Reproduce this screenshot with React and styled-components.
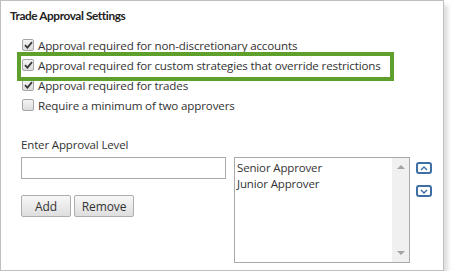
import React from 'react';
import styled, { createGlobalStyle } from 'styled-components';

const Global = createGlobalStyle`
    html, body {
        margin: 0;
        padding: 0;
        background: #fff;
    }
    body {
        font-family: "Segoe UI", "Open Sans", "Liberation Sans", sans-serif;
        color: #333;
    }
`

const Panel = styled.div`
    position: relative;
    box-sizing: border-box;
    width: 444px;
    height: 271px;
    border: 1px solid #bfbfbf;
    background: #fff;
    padding: 6px 9px;
    box-shadow: 4px 5px 4px rgba(0, 0, 0, 0.13);
`

const Title = styled.div`
    font-family: Lato, "Open Sans", sans-serif;
    font-size: 11.8px;
    line-height: 18px;
    font-weight: 700;
    letter-spacing: -0.4px;
    color: #222;
`

const Options = styled.div`
    display: flex;
    flex-direction: column;
    margin-top: 10px;
    padding-left: 12px;
`

const Option = styled.div`
    display: flex;
    align-items: center;
    gap: 4px;
    height: 20px;
    font-size: 11.6px;
    letter-spacing: -0.15px;
    white-space: nowrap;
`

const Box = styled.span`
    box-sizing: border-box;
    width: 12px;
    height: 12px;
    flex: none;
    display: flex;
    align-items: center;
    justify-content: center;
    border: 1px solid #a6a6a6;
    border-radius: 2px;
    background: linear-gradient(#f4f4f4, #dcdcdc);
`

const Highlight = styled.div`
    position: absolute;
    left: 16px;
    top: 51px;
    width: 377px;
    height: 29px;
    box-sizing: border-box;
    border: 4px solid #5f9f2c;
    pointer-events: none;
`

const Section = styled.div`
    margin-top: 22px;
    padding-left: 11px;
`

const Label = styled.div`
    font-size: 11.5px;
    line-height: 16px;
    letter-spacing: -0.15px;
    margin-bottom: 4px;
`

const Row = styled.div`
    display: flex;
    align-items: flex-start;
`

const LeftCol = styled.div`
    display: flex;
    flex-direction: column;
    gap: 16px;
    width: 205px;
`

const TextInput = styled.div`
    box-sizing: border-box;
    height: 22px;
    width: 205px;
    border: 1px solid #a9a9a9;
    background: #fff;
`

const Buttons = styled.div`
    display: flex;
    gap: 3px;
`

const Button = styled.div`
    box-sizing: border-box;
    width: ${p => p.w}px;
    height: 22px;
    display: flex;
    align-items: center;
    justify-content: center;
    border: 1px solid #adadad;
    border-radius: 2px;
    background: linear-gradient(#f7f7f7, #dedede);
    font-size: 12px;
    letter-spacing: -0.1px;
    color: #333;
`

const ListBox = styled.div`
    box-sizing: border-box;
    display: flex;
    margin-left: 8px;
    width: 176px;
    height: 106px;
    border: 1px solid #a9a9a9;
    background: #fff;
`

const Items = styled.div`
    flex: 1;
    padding: 2px 2px;
    font-size: 11.5px;
    line-height: 16px;
    letter-spacing: -0.15px;
`

const Scroll = styled.div`
    width: 17px;
    background: #f0f0f0;
    display: flex;
    flex-direction: column;
    justify-content: space-between;
    align-items: center;
    padding: 7px 0;
    box-sizing: border-box;
`

const Tri = styled.span`
    width: 0;
    height: 0;
    border-left: 4px solid transparent;
    border-right: 4px solid transparent;
    ${p => p.down
        ? 'border-top: 4px solid #a3a3a3;'
        : 'border-bottom: 4px solid #a3a3a3;'}
`

const Arrows = styled.div`
    display: flex;
    flex-direction: column;
    gap: 11px;
    margin-left: 6px;
    margin-top: 5px;
`

const ArrowBtn = styled.div`
    box-sizing: border-box;
    width: 16px;
    height: 12px;
    border: 2px solid #3d6ea6;
    border-radius: 3px;
    display: flex;
    align-items: center;
    justify-content: center;
    background: #fff;
`

const Check = () => (
    <svg width="9" height="8" viewBox="0 0 9 8">
        <path d="M1 4.2 L3.4 6.6 L8 1.2" fill="none" stroke="#3a3a3a" strokeWidth="1.8" />
    </svg>
)

const Chevron = ({ down }) => (
    <svg width="8" height="5" viewBox="0 0 8 5">
        <path d={down ? 'M1 1 L4 4 L7 1' : 'M1 4 L4 1 L7 4'} fill="none" stroke="#3d6ea6" strokeWidth="1.4" />
    </svg>
)

const options = [
    { text: 'Approval required for non-discretionary accounts', on: true },
    { text: 'Approval required for custom strategies that override restrictions', on: true },
    { text: 'Approval required for trades', on: true },
    { text: 'Require a minimum of two approvers', on: false },
]

export default function App() {
    return (
        <>
            <Global />
            <Panel>
                <Title>Trade Approval Settings</Title>
                <Options>
                    {options.map(o => (
                        <Option key={o.text}>
                            <Box>{o.on && <Check />}</Box>
                            {o.text}
                        </Option>
                    ))}
                </Options>
                <Section>
                    <Label>Enter Approval Level</Label>
                    <Row>
                        <LeftCol>
                            <TextInput />
                            <Buttons>
                                <Button w={50}>Add</Button>
                                <Button w={60}>Remove</Button>
                            </Buttons>
                        </LeftCol>
                        <ListBox>
                            <Items>
                                <div>Senior Approver</div>
                                <div>Junior Approver</div>
                            </Items>
                            <Scroll>
                                <Tri />
                                <Tri down />
                            </Scroll>
                        </ListBox>
                        <Arrows>
                            <ArrowBtn><Chevron /></ArrowBtn>
                            <ArrowBtn><Chevron down /></ArrowBtn>
                        </Arrows>
                    </Row>
                </Section>
                <Highlight />
            </Panel>
        </>
    )
}
